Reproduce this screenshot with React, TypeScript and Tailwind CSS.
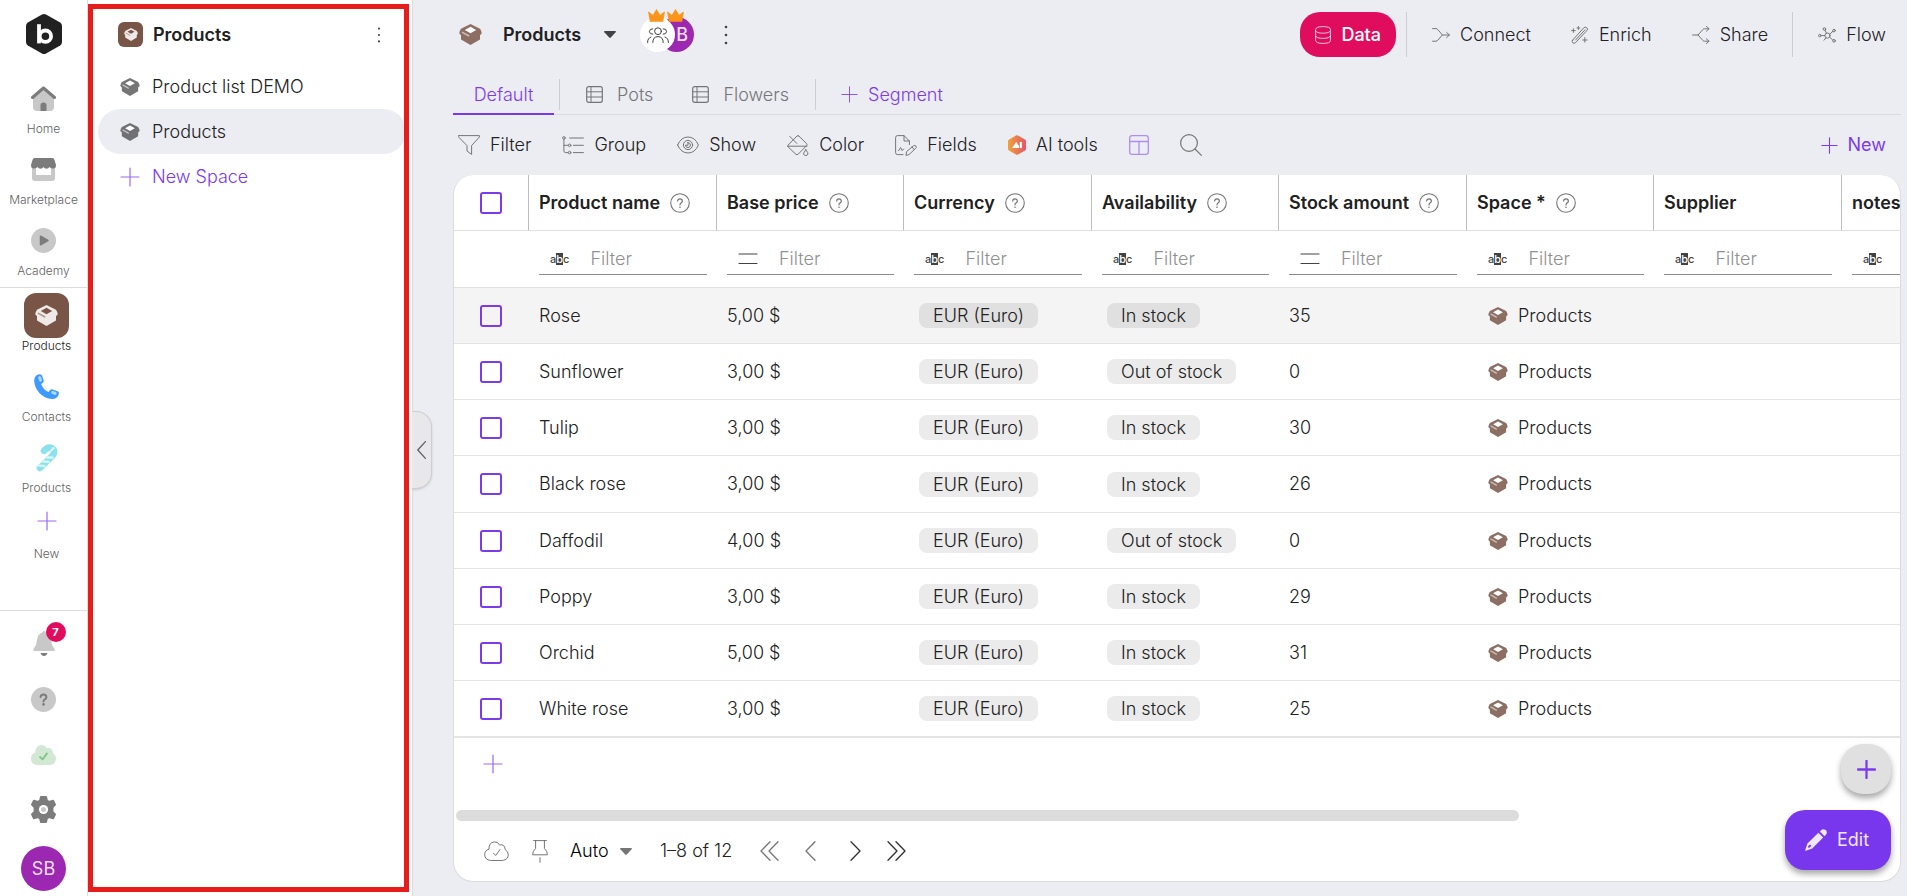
import type { ReactNode } from "react";
import clsx from "clsx";

interface IconProps {
  className?: string;
}

interface Column {
  title: string;
  width: string;
  filter: "text" | "number";
  help?: boolean;
}

interface Product {
  name: string;
  price: string;
  availability: string;
  stock: string;
}

const columns: Column[] = [
  { title: "Product name", width: "w-[188px]", filter: "text", help: true },
  { title: "Base price", width: "w-[187px]", filter: "number", help: true },
  { title: "Currency", width: "w-[188px]", filter: "text", help: true },
  { title: "Availability", width: "w-[187px]", filter: "text", help: true },
  { title: "Stock amount", width: "w-[188px]", filter: "number", help: true },
  { title: "Space *", width: "w-[187px]", filter: "text", help: true },
  { title: "Supplier", width: "w-[188px]", filter: "text" },
  { title: "notes", width: "w-[187px]", filter: "text" },
];

const products: Product[] = [
  { name: "Rose", price: "5,00 $", availability: "In stock", stock: "35" },
  { name: "Sunflower", price: "3,00 $", availability: "Out of stock", stock: "0" },
  { name: "Tulip", price: "3,00 $", availability: "In stock", stock: "30" },
  { name: "Black rose", price: "3,00 $", availability: "In stock", stock: "26" },
  { name: "Daffodil", price: "4,00 $", availability: "Out of stock", stock: "0" },
  { name: "Poppy", price: "3,00 $", availability: "In stock", stock: "29" },
  { name: "Orchid", price: "5,00 $", availability: "In stock", stock: "31" },
  { name: "White rose", price: "3,00 $", availability: "In stock", stock: "25" },
];

function Svg({ className, box, children }: IconProps & { box: string; children: ReactNode }) {
  return (
    <svg
      viewBox={box}
      className={clsx("shrink-0", className)}
      fill="none"
      stroke="currentColor"
      strokeLinecap="round"
      strokeLinejoin="round"
      aria-hidden="true"
    >
      {children}
    </svg>
  );
}

function BoxIcon({ className, hole = "#ffffff" }: IconProps & { hole?: string }) {
  return (
    <Svg box="0 0 23 21" className={className}>
      <path
        d="M11.5 0 21 4.8Q23 8 22.8 9.2L21 11.2V15.6L11.5 21 2 15.6V11.2L.2 9.2Q0 8 2 4.8Z"
        fill="currentColor"
        stroke="none"
      />
      <path d="M11.5 2.8 17.2 6 11.5 9.2 5.8 6Z" fill={hole} stroke="none" />
      <path d="M3.4 8.4 9.6 11.8" stroke={hole} strokeWidth="1.6" opacity=".55" />
    </Svg>
  );
}

function PlusIcon({ className, weight = 1 }: IconProps & { weight?: number }) {
  return (
    <Svg box="0 0 20 20" className={className}>
      <path d="M10 1V19M1 10H19" strokeWidth={weight} />
    </Svg>
  );
}

function DotsIcon({ className }: IconProps) {
  return (
    <Svg box="0 0 4 20" className={className}>
      <g fill="currentColor" stroke="none">
        <circle cx="2" cy="2" r="1.3" />
        <circle cx="2" cy="10" r="1.3" />
        <circle cx="2" cy="18" r="1.3" />
      </g>
    </Svg>
  );
}

function CaretIcon({ className }: IconProps) {
  return (
    <Svg box="0 0 12 7" className={className}>
      <path d="M.8 0H11.2Q12.4.2 11.6 1.2L6.8 6.5Q6 7.2 5.2 6.5L.4 1.2Q-.4.2.8 0Z" fill="currentColor" stroke="none" />
    </Svg>
  );
}

function LogoIcon() {
  return (
    <Svg box="0 0 36 40" className="h-10 w-9">
      <path
        d="M16 .6Q18 -.4 20 .6L34.2 8.6Q36 9.8 36 12V28Q36 30.2 34.2 31.4L20 39.4Q18 40.4 16 39.4L1.8 31.4Q0 30.2 0 28V12Q0 9.8 1.8 8.6Z"
        fill="#212121"
        stroke="none"
      />
      <circle cx="19.4" cy="22.2" r="5.7" stroke="#ffffff" strokeWidth="3.8" />
      <path d="M13 10.2V29.4" stroke="#ffffff" strokeWidth="3.8" strokeLinecap="butt" />
    </Svg>
  );
}

function HomeIcon() {
  return (
    <Svg box="0 0 25 25" className="size-[25px]">
      <path d="M2 11 12.5 2.5 23 11V21Q23 25 19 25H6Q2 25 2 21Z" fill="#c8c8c8" stroke="none" />
      <path d="M1.5 11.5 12.5 2 23.5 11.5" stroke="#7c7c7c" strokeWidth="3" />
      <path d="M9.5 25V19Q9.5 16.5 12.5 16.5T15.5 19V25Z" fill="#7c7c7c" stroke="none" />
    </Svg>
  );
}

function MarketIcon() {
  return (
    <Svg box="0 0 25 23" className="h-[23px] w-[25px]">
      <path d="M1 8H24V20Q24 23 21 23H4Q1 23 1 20Z" fill="#c8c8c8" stroke="none" />
      <path d="M5 9H20V17H5Z" fill="#ffffff" stroke="none" />
      <path
        d="M3.5 0H21.5Q23 0 23.5 2L25 7Q25 10.5 22.5 10.5 19.6 10.5 18.5 9 17.6 10.8 15.5 10.8 13.5 10.8 12.5 9 11.5 10.8 9.5 10.8 7.4 10.8 6.5 9 5.4 10.5 2.5 10.5 0 10.5 0 7L1.5 2Q2 0 3.5 0Z"
        fill="#7c7c7c"
        stroke="none"
      />
    </Svg>
  );
}

function AcademyIcon() {
  return (
    <Svg box="0 0 25 25" className="size-[25px]">
      <circle cx="12.5" cy="12.5" r="12.5" fill="#c8c8c8" stroke="none" />
      <path d="M9.5 8.2 17 12.5 9.5 16.8Z" fill="#7c7c7c" stroke="#7c7c7c" strokeWidth="1.5" />
    </Svg>
  );
}

function PhoneIcon() {
  return (
    <Svg box="0 0 25 25" className="size-[25px]">
      <path
        d="M3.5 .8Q6.5 -.6 8 1.6L9.7 6.2Q10.2 8 8.6 9L7.2 10Q8.6 15 14.4 18L16 16.2Q17 15 18.6 15.4L23.6 17.2Q25.4 18 24.8 20.2 23.4 25 18 25 10.5 24.6 5.4 19 .6 13.6 .2 7.2 0 2.6 3.5 .8Z"
        fill="#3d9bff"
        stroke="none"
      />
      <path d="M5.6 3.6 6.6 6.2M18.6 18.4 21.2 19.4" stroke="#b5d9ff" strokeWidth="2.8" />
    </Svg>
  );
}

function CandyIcon() {
  return (
    <Svg box="0 0 22 28" className="h-7 w-[22px]">
      <path d="M8 6.8Q12 2.4 16 4.2 20 7.4 16.2 12.2L4 24" stroke="#8be2ec" strokeWidth="6.6" />
      <path
        d="M14.6 7 18.4 3.4M9.6 13.2 17.6 13.8M5.6 17.2 13.6 18M2 21.4 9.6 22.2"
        stroke="#d4f5f8"
        strokeWidth="2.4"
        strokeLinecap="butt"
      />
    </Svg>
  );
}

function BellIcon() {
  return (
    <Svg box="0 0 22 25" className="h-[25px] w-[22px]">
      <path
        d="M11 0Q12.5 0 12.8 1.5 17.5 3 18 9 18.2 14 21.5 18 22.5 20 20.5 20H1.5Q-.5 20 .5 18 3.8 14 4 9 4.5 3 9.2 1.5 9.5 0 11 0Z"
        fill="#c8c8c8"
        stroke="none"
      />
      <path d="M7.5 22H14.5Q13.5 25 11 25T7.5 22Z" fill="#7c7c7c" stroke="none" />
    </Svg>
  );
}

function QuestionIcon() {
  return (
    <Svg box="0 0 25 25" className="size-[25px]">
      <circle cx="12.5" cy="12.5" r="12.5" fill="#c8c8c8" stroke="none" />
      <path d="M9.6 10Q9.8 7.4 12.5 7.4T15.4 10Q15.4 11.6 13.8 12.4 12.5 13 12.5 14.6" stroke="#7c7c7c" strokeWidth="2" />
      <circle cx="12.5" cy="17.4" r="1.3" fill="#7c7c7c" stroke="none" />
    </Svg>
  );
}

function CloudCheckIcon() {
  return (
    <Svg box="0 0 25 20" className="h-5 w-[25px]">
      <path
        d="M6 20Q0 19.5 0 13.5 .2 8.8 4.4 7.6 4 1 10 0 14 -.2 15.8 3.2 21.4 2 22 8.2 25 10 25 13.8 24.6 19.4 19 20Z"
        fill="#d2e8d3"
        stroke="none"
      />
      <path d="M9 12 11.6 14.4 16 8.4" stroke="#81c784" strokeWidth="1.8" />
    </Svg>
  );
}

function GearIcon() {
  return (
    <Svg box="0 0 26 28" className="h-[27px] w-[25px]">
      <path
        d="M10.3 1H15.7L16.6 4.8 18.8 6 23 4.8 25 8.9 22.3 11.9V16.1L25 19.1 23 23.2 18.8 22 16.6 23.2 15.7 27H10.3L9.4 23.2 7.2 22 3 23.2 1 19.1 3.7 16.1V11.9L1 8.9 3 4.8 7.2 6 9.4 4.8Z"
        fill="#7c7c7c"
        stroke="#7c7c7c"
        strokeWidth="2"
      />
      <circle cx="13" cy="14" r="4.8" fill="#ffffff" stroke="none" />
      <circle cx="13" cy="14" r="2.6" fill="#c8c8c8" stroke="none" />
    </Svg>
  );
}

function PeopleIcon() {
  return (
    <Svg box="0 0 22 16" className="h-4 w-[22px]">
      <circle cx="11" cy="4.2" r="3.4" />
      <path d="M5.8 15.5Q5.8 9.6 11 9.6T16.2 15.5M5.8 1.8Q2.4 1.6 2.4 4.6 2.6 7.4 5.8 7.2M16.2 1.8Q19.6 1.6 19.6 4.6 19.4 7.4 16.2 7.2M.6 15.5Q.4 11.2 4 10M21.4 15.5Q21.6 11.2 18 10" />
    </Svg>
  );
}

function CrownIcon({ className }: IconProps) {
  return (
    <Svg box="0 0 17 13" className={clsx("h-[13px] w-[17px] text-[#fb9418]", className)}>
      <path d="M2.2 12.5 .6 3 5 6.4 8.5 .6 12 6.4 16.4 3 14.8 12.5Z" fill="currentColor" strokeWidth=".8" />
    </Svg>
  );
}

function SheetIcon() {
  return (
    <Svg box="0 0 17 17" className="size-[17px]">
      <rect x=".7" y=".7" width="15.6" height="15.6" rx="2" strokeWidth="1.2" />
      <path d="M5 .7V16.3M.7 5.8H16.3M.7 11H16.3" />
    </Svg>
  );
}

function FilterIcon() {
  return (
    <Svg box="0 0 22 20" className="h-5 w-[22px]">
      <path d="M.6 .6H21.4V2L13.6 10.6V19.4L9 16V10.6L.6 2Z" />
    </Svg>
  );
}

function GroupIcon() {
  return (
    <Svg box="0 0 22 19" className="h-[19px] w-[22px]">
      <circle cx="1.9" cy="1.9" r="1.3" />
      <circle cx="7.6" cy="9.3" r="1.3" />
      <circle cx="7.6" cy="16.6" r="1.3" />
      <path d="M1.9 3.4V15Q1.9 16.6 3.6 16.6H6M1.9 9.3H6M7.6 2H21.4M11.4 9.3H21.4M11.4 16.6H21.4" />
    </Svg>
  );
}

function EyeIcon() {
  return (
    <Svg box="0 0 22 18" className="h-[18px] w-[22px]">
      <path d="M.6 9Q4 1 11 1T21.4 9Q18 17 11 17T.6 9Z" />
      <circle cx="11" cy="9" r="4.6" />
      <path d="M11 6.6V9.2H8.4Q8.6 11.4 11 11.6 13.4 11.4 13.5 9 13.4 6.8 11 6.6Z" />
    </Svg>
  );
}

function BucketIcon() {
  return (
    <Svg box="0 0 22 21" className="h-[21px] w-[22px]">
      <path d="M11.8 1 19.6 8.6Q20.4 9.6 19.6 10.6L11.2 19.2Q10 20.2 8.8 19.2L1.2 12Q.4 11 1.2 10L10 1Q11 .2 11.8 1ZM.8 11.2H20M2.8 1.4 9.8 8.4" />
      <path d="M18.8 14.8Q21.4 18 21 19 20.4 20.6 18.8 20.6T16.6 19Q16.4 18 18.8 14.8Z" />
    </Svg>
  );
}

function FieldsIcon() {
  return (
    <Svg box="0 0 22 21" className="h-[21px] w-[22px]">
      <path d="M8 19.6H2.6Q.6 19.6 .6 17.6V2.6Q.6 .6 2.6 .6H9L14.4 6V9.6M9 .6V6H14.4M3.6 15.6 5.6 12.6 7.2 15.6 8.6 14" />
      <path d="M11 20 11.6 16.6 18.4 10.8Q20 10 21 11.2T20.6 13.4L14.2 19.4ZM17 12 19.2 14.6" />
    </Svg>
  );
}

function AiIcon() {
  return (
    <svg viewBox="0 0 18 20" className="h-5 w-[18px] shrink-0" aria-hidden="true">
      <defs>
        <linearGradient id="ai" x1="0" x2="1" y1="0" y2="0">
          <stop offset="0" stopColor="#f0a13a" />
          <stop offset="1" stopColor="#e6556b" />
        </linearGradient>
      </defs>
      <path
        d="M8 .4Q9 0 10 .4L17 4.4Q18 5 18 6V14Q18 15 17 15.6L10 19.6Q9 20 8 19.6L1 15.6Q0 15 0 14V6Q0 5 1 4.4Z"
        fill="url(#ai)"
      />
      <path d="M4 13 8.2 7 11 11V13ZM11.8 7H13.8V13H11.8Z" fill="#ffffff" />
    </svg>
  );
}

function LayoutIcon() {
  return (
    <Svg box="0 0 20 20" className="size-5 text-[#b08cf5]">
      <rect x=".7" y=".7" width="18.6" height="18.6" rx="2.4" strokeWidth="1.3" />
      <path d="M.7 6.5H19.3M10 6.5V19.3" strokeWidth="1.3" />
    </Svg>
  );
}

function SearchIcon() {
  return (
    <Svg box="0 0 22 22" className="size-[22px] text-[#757575]">
      <circle cx="9" cy="9" r="8.4" strokeWidth="1.2" />
      <path d="M15 15 21.4 21.4" strokeWidth="1.2" />
    </Svg>
  );
}

function DataIcon() {
  return (
    <Svg box="0 0 16 18" className="h-[18px] w-4">
      <path
        d="M.6 3.4Q.6 .6 8 .6T15.4 3.4V14.6Q15.4 17.4 8 17.4T.6 14.6ZM.6 5Q1.6 7.2 8 7.2T15.4 5M.6 10Q1.6 12.4 8 12.4T15.4 10"
        opacity=".75"
      />
    </Svg>
  );
}

function ConnectIcon() {
  return (
    <Svg box="0 0 18 18" className="size-[18px]">
      <path d="M.6 2.6H4Q5 2.6 5.8 3.6L10.4 9 5.8 14.2Q5 15.2 4 15.2H.6M10.4 9H17.4M14.6 6.4 17.4 9 14.6 11.6" />
    </Svg>
  );
}

function EnrichIcon() {
  return (
    <Svg box="0 0 18 18" className="size-[18px]">
      <path d="M1.6 14.2 12.8 1.8Q14.4 .4 15.8 1.8T16 4.4L4.6 16.6Q3 18 1.8 16.8T1.6 14.2ZM4.6 14 14 3.8" />
      <path d="M2.4 2.8V6.4M.6 4.6H4.2M7.4 .6V3.4M6 2H8.8M13.8 11.6V16.2M11.6 14H16.2" />
    </Svg>
  );
}

function ShareIcon() {
  return (
    <Svg box="0 0 18 18" className="size-[18px]">
      <path d="M.6 9H6L11 3.4Q11.6 2.8 12.6 2.8H17M6 9 11 14.6Q11.6 15.2 12.6 15.2H17M14.4 .4 17 2.8 14.4 5.2M14.4 12.8 17 15.2 14.4 17.6" />
    </Svg>
  );
}

function FlowIcon() {
  return (
    <Svg box="0 0 18 16" className="h-4 w-[18px]">
      <circle cx="9.5" cy="8.6" r="2.6" />
      <circle cx="1.8" cy="8.6" r="1.3" />
      <circle cx="6.4" cy="2" r="1.3" />
      <circle cx="16" cy="3.6" r="1.3" />
      <circle cx="16" cy="13.8" r="1.3" />
      <path d="M3.2 8.6H6.8M7 3.2 8.4 6.2M11.8 7.2 14.8 4.4M11.8 10.2 14.6 13M8 10.8 6 13.2" />
    </Svg>
  );
}

function HelpIcon() {
  return (
    <Svg box="0 0 20 20" className="size-5 text-[#757575]">
      <circle cx="10" cy="10" r="9.3" strokeWidth="1.1" />
      <path d="M7.6 8Q7.8 5.8 10 5.8T12.4 8Q12.4 9.2 11 10 10 10.6 10 12" strokeWidth="1.2" />
      <circle cx="10" cy="14.2" r=".8" fill="currentColor" stroke="none" />
    </Svg>
  );
}

function CloudOutlineIcon() {
  return (
    <Svg box="0 0 25 20" className="h-5 w-[25px]">
      <path d="M6 19.4Q.8 18.8 .7 13.6 .8 9.2 5 8.2 4.6 1.8 10.2 .9 14 .6 15.6 4 20.6 2.6 21.2 8.6 24.2 10.4 24.3 13.8 24 18.6 19 19.4Z" />
      <path d="M9.4 12.2 11.8 14.4 16 8.6" />
    </Svg>
  );
}

function PinIcon() {
  return (
    <Svg box="0 0 16 23" className="h-[23px] w-4">
      <path d="M1.6 .6H14.4M3.6 .6V8.4Q.6 11 .6 14.8H15.4Q15.4 11 12.4 8.4V.6M8 17.6V22.4" />
    </Svg>
  );
}

function Chevrons({ double, flip }: { double?: boolean; flip?: boolean }) {
  return (
    <Svg box={double ? "0 0 19 20" : "0 0 11 20"} className={clsx("h-5", double ? "w-[19px]" : "w-[11px]", flip && "rotate-180")}>
      <path d="M10 .8 1 10 10 19.2" strokeWidth="1.3" />
      {double && <path d="M18 .8 9 10 18 19.2" strokeWidth="1.3" />}
    </Svg>
  );
}

function PencilIcon() {
  return (
    <Svg box="0 0 22 22" className="size-[22px]">
      <g fill="currentColor" stroke="none">
        <path d="M14.8 2.4 17 .6Q18.8 -.4 20.8 1.2 22.6 3.2 21.4 5L19.6 7.2Z" />
        <path d="M13.4 3.8 18.2 8.6 7.2 19.4 .8 21.8Q0 22 .2 21.2L2.4 14.6Z" />
      </g>
      <path d="M4 17.8 5.2 16.6" stroke="#7837ed" strokeWidth="2" />
    </Svg>
  );
}

function TextFilterIcon() {
  return (
    <span className="flex w-5 items-center justify-center text-[11px] leading-3 font-medium text-[#424242]" aria-hidden="true">
      a<span className="bg-[#424242] text-white">b</span>c
    </span>
  );
}

function NumberFilterIcon() {
  return (
    <Svg box="0 0 20 14" className="h-[14px] w-5 text-[#424242]">
      <path d="M1 2H19M1 11.5H19" strokeWidth="1.2" />
    </Svg>
  );
}

function RailItem({ label, active, children }: { label: string; active?: boolean; children: ReactNode }) {
  return (
    <a
      href="#"
      className={clsx("flex h-[71px] flex-col items-center text-xs leading-4", active ? "text-[#212121]" : "text-[#616161]")}
    >
      <span className="flex h-[45px] items-center">{children}</span>
      {label}
    </a>
  );
}

function Rail() {
  return (
    <nav className="flex w-[88px] shrink-0 flex-col border-r border-[#dcdcdc] bg-white">
      <div className="flex h-[76px] justify-center pt-[14px]">
        <LogoIcon />
      </div>
      <div className="h-[211px]">
        <RailItem label="Home">
          <HomeIcon />
        </RailItem>
        <RailItem label="Marketplace">
          <MarketIcon />
        </RailItem>
        <RailItem label="Academy">
          <AcademyIcon />
        </RailItem>
      </div>
      <div className="flex-1 border-y border-[#dcdcdc] pt-[5px] pl-[6px]">
        <RailItem label="Products" active>
          <span className="flex size-[45px] items-center justify-center rounded-xl bg-[#795548] text-[#efe9e7]">
            <BoxIcon className="h-[21px] w-[23px]" hole="#795548" />
          </span>
        </RailItem>
        <RailItem label="Contacts">
          <PhoneIcon />
        </RailItem>
        <RailItem label="Products">
          <CandyIcon />
        </RailItem>
        <button className="flex w-full flex-col items-center gap-[10px] text-xs leading-4 text-[#616161]">
          <span className="flex h-[30px] items-center text-[#9b6bf2]">
            <PlusIcon className="size-5" weight={1.2} />
          </span>
          New
        </button>
      </div>
      <div className="flex flex-col items-center pt-1 pb-[5px]">
        <button className="relative flex h-14 items-center" aria-label="Notifications">
          <BellIcon />
          <span className="absolute top-[7px] left-[13px] flex size-5 items-center justify-center rounded-full bg-[#e00d5f] text-[11px] font-bold text-white">
            7
          </span>
        </button>
        <button className="flex h-14 items-center" aria-label="Help">
          <QuestionIcon />
        </button>
        <button className="flex h-14 items-center" aria-label="Sync status">
          <CloudCheckIcon />
        </button>
        <button className="flex h-[52px] items-center" aria-label="Settings">
          <GearIcon />
        </button>
        <button className="mt-[11px] size-[45px] rounded-full bg-[#9c27b0] font-normal text-[#f0dff3]">SB</button>
      </div>
    </nav>
  );
}

function SpaceItem({ label, active, accent, icon }: { label: string; active?: boolean; accent?: boolean; icon: ReactNode }) {
  return (
    <a
      href="#"
      className={clsx(
        "flex h-[45px] items-center gap-3 rounded-full pl-[22px]",
        active && "bg-[#ecedf3]",
        accent ? "text-[#7c3aed]" : "text-[#212121]"
      )}
    >
      {icon}
      {label}
    </a>
  );
}

function Sidebar() {
  return (
    <aside className="relative w-[325px] shrink-0 border-r border-[#dcdcdc] bg-white">
      <div className="flex h-16 items-center gap-[10px] pt-[5px] pr-[31px] pl-[30px]">
        <span className="flex size-[25px] items-center justify-center rounded-md bg-[#795548] text-[#efe9e7]">
          <BoxIcon className="h-[13px] w-[14px]" hole="#795548" />
        </span>
        <h2 className="flex-1 font-semibold text-[#212121]">Products</h2>
        <button aria-label="Space options">
          <DotsIcon className="h-4 w-1 text-[#424242]" />
        </button>
      </div>
      <div className="pr-[6px] pl-[10px]">
        <SpaceItem label="Product list DEMO" icon={<BoxIcon className="h-[18px] w-5 text-[#757575]" />} />
        <SpaceItem label="Products" active icon={<BoxIcon className="h-[18px] w-5 text-[#707075]" />} />
        <SpaceItem label="New Space" accent icon={<PlusIcon className="size-5 text-[#9b6bf2]" weight={1.2} />} />
      </div>
      <div className="pointer-events-none absolute inset-y-1 right-[3px] left-0 border-5 border-[#e91c1c]" />
      <button
        className="absolute top-1/2 -right-5 mt-[2px] flex h-[78px] w-5 -translate-y-1/2 items-center justify-center rounded-r-2xl border border-l-0 border-[#cfcfd2] bg-[#e8e8ea] text-[#616161] shadow-sm"
        aria-label="Collapse"
      >
        <Svg box="0 0 9 18" className="h-[18px] w-[9px]">
          <path d="M8.4 .6 .8 9 8.4 17.4" strokeWidth="1.3" />
        </Svg>
      </button>
    </aside>
  );
}

function TopLink({ label, icon }: { label: string; icon: ReactNode }) {
  return (
    <button className="flex h-[45px] items-center gap-[10px] text-[#212121]">
      <span className="text-[#757575]">{icon}</span>
      {label}
    </button>
  );
}

function Header() {
  return (
    <header className="flex h-[57px] items-center pt-3 pr-[15px]">
      <BoxIcon className="ml-[6px] h-[21px] w-[23px] text-[#8d6e63]" />
      <button className="ml-[21px] flex items-center gap-[23px] font-semibold text-[#212121]">
        Products
        <CaretIcon className="h-[7px] w-3 text-[#424242]" />
      </button>
      <div className="relative ml-6 flex">
        <span className="z-10 flex size-[35px] items-center justify-center rounded-full bg-white text-[#424242]">
          <PeopleIcon />
        </span>
        <span className="-ml-4 flex size-[35px] items-center justify-end rounded-full bg-[#9c27b0] pr-[6px] font-medium text-[#f0dff3]">
          B
        </span>
        <CrownIcon className="absolute -top-2 left-2 z-20" />
        <CrownIcon className="absolute -top-2 left-[27px] z-20" />
      </div>
      <button className="ml-[30px]" aria-label="More options">
        <DotsIcon className="h-5 w-1 text-[#424242]" />
      </button>
      <div className="ml-auto flex items-center">
        <button className="flex h-[45px] items-center gap-[10px] rounded-[20px] bg-[#e00d5f] px-[15px] font-medium text-white">
          <DataIcon />
          Data
        </button>
        <div className="ml-[10px] flex h-[45px] gap-10 border-l border-[#cdced4] pr-6 pl-[25px]">
          <TopLink label="Connect" icon={<ConnectIcon />} />
          <TopLink label="Enrich" icon={<EnrichIcon />} />
          <TopLink label="Share" icon={<ShareIcon />} />
        </div>
        <div className="flex h-[45px] border-l border-[#cdced4] pl-[25px]">
          <TopLink label="Flow" icon={<FlowIcon />} />
        </div>
      </div>
    </header>
  );
}

function SegmentTabs() {
  return (
    <div className="mt-[22px] flex h-9 border-b border-[#dcdcdc]">
      <button className="-mb-px w-[101px] border-b-2 border-[#7837ed] pb-[3px] text-[#7c3aed]">Default</button>
      <div className="ml-[5px] flex h-[31px] gap-[39px] border-x border-[#cdced4] px-[26px] text-[#757578]">
        <button className="flex items-center gap-[14px]">
          <SheetIcon />
          Pots
        </button>
        <button className="flex items-center gap-[14px]">
          <SheetIcon />
          Flowers
        </button>
      </div>
      <button className="ml-[25px] flex h-[31px] items-center gap-[10px] text-[#7c3aed]">
        <PlusIcon className="size-[17px]" />
        Segment
      </button>
    </div>
  );
}

function Tool({ label, icon }: { label: string; icon: ReactNode }) {
  return (
    <button className="flex items-center gap-[10px] text-[#212121]">
      <span className="text-[#757575]">{icon}</span>
      {label}
    </button>
  );
}

function Toolbar() {
  return (
    <div className="flex h-[60px] items-center gap-[31px] pr-[15px] pl-[5px]">
      <Tool label="Filter" icon={<FilterIcon />} />
      <Tool label="Group" icon={<GroupIcon />} />
      <Tool label="Show" icon={<EyeIcon />} />
      <Tool label="Color" icon={<BucketIcon />} />
      <Tool label="Fields" icon={<FieldsIcon />} />
      <Tool label="AI tools" icon={<AiIcon />} />
      <button aria-label="Layout">
        <LayoutIcon />
      </button>
      <button aria-label="Search">
        <SearchIcon />
      </button>
      <button className="ml-auto flex items-center gap-[10px] font-normal text-[#7c3aed]">
        <PlusIcon className="size-[17px]" weight={1.3} />
        New
      </button>
    </div>
  );
}

function Checkbox({ label }: { label: string }) {
  return (
    <input
      type="checkbox"
      aria-label={label}
      className="mx-auto block size-[22px] appearance-none rounded-[3px] border-2 border-[#7c3aed] checked:bg-[#7c3aed]"
    />
  );
}

function Pill({ dark, children }: { dark: boolean; children: ReactNode }) {
  return (
    <span
      className={clsx(
        "ml-[5px] inline-block h-[25px] rounded-lg px-[14px] align-middle leading-[25px]",
        dark ? "bg-[#e0e0e0]" : "bg-[#ebebeb]"
      )}
    >
      {children}
    </span>
  );
}

function ProductTable() {
  return (
    <table className="w-[1575px] table-fixed border-separate border-spacing-0 text-left">
      <thead>
        <tr className="h-14">
          <th className="w-[75px] border-r border-b border-r-[#bdbdbd] border-b-[#e0e0e0]">
            <Checkbox label="Select all" />
          </th>
          {columns.map((column) => (
            <th
              key={column.title}
              className={clsx("border-r border-b border-r-[#bdbdbd] border-b-[#e0e0e0] px-[10px] font-semibold text-[#212121]", column.width)}
            >
              <span className="flex items-center gap-[10px] whitespace-nowrap">
                {column.title}
                {column.help && <HelpIcon />}
              </span>
            </th>
          ))}
        </tr>
        <tr className="h-[57px]">
          <td className="border-b border-[#e0e0e0]" />
          {columns.map((column) => (
            <td key={column.title} className="border-b border-[#e0e0e0] px-[10px]">
              <label className="flex h-8 items-center gap-[21px] border-b border-[#8c8c8c] pl-[11px]">
                {column.filter === "text" ? <TextFilterIcon /> : <NumberFilterIcon />}
                <input
                  placeholder="Filter"
                  aria-label={`Filter ${column.title}`}
                  className="w-full min-w-0 bg-transparent outline-none placeholder:text-[#919191]"
                />
              </label>
            </td>
          ))}
        </tr>
      </thead>
      <tbody className="[&_td]:border-b [&_td]:border-[#e4e4e6] [&_tr:last-child_td]:border-b-2">
        {products.map((product, index) => (
          <tr key={product.name} className={clsx("h-14 text-[#212121] nth-[4n]:h-[57px]", index === 0 && "bg-[#f4f4f4]")}>
            <td className="pr-px">
              <Checkbox label={`Select ${product.name}`} />
            </td>
            <td className="px-[10px]">{product.name}</td>
            <td className="px-[10px]">{product.price}</td>
            <td className="px-[10px]">
              <Pill dark={index === 0}>EUR (Euro)</Pill>
            </td>
            <td className="px-[10px]">
              <Pill dark={index === 0}>{product.availability}</Pill>
            </td>
            <td className="px-[10px]">{product.stock}</td>
            <td className="px-[10px]">
              <a href="#" className="flex items-center gap-[10px] pl-[11px]">
                <BoxIcon className="h-[18px] w-5 text-[#8d6e63]" />
                Products
              </a>
            </td>
            <td />
            <td />
          </tr>
        ))}
      </tbody>
    </table>
  );
}

function Pager() {
  return (
    <div className="flex h-[60px] items-center pl-[30px] text-[#757575]">
      <CloudOutlineIcon />
      <button className="ml-[23px]" aria-label="Pin">
        <PinIcon />
      </button>
      <label className="relative ml-[22px] flex items-center">
        <select aria-label="Rows per page" className="w-[62px] appearance-none bg-transparent text-black">
          <option>Auto</option>
        </select>
        <CaretIcon className="pointer-events-none absolute right-0 h-[7px] w-3" />
      </label>
      <span className="ml-7 w-[70px] whitespace-nowrap text-[#212121]">1–8 of 12</span>
      <div className="ml-[30px] flex items-center">
        <button aria-label="First page">
          <Chevrons double />
        </button>
        <button className="ml-[26px]" aria-label="Previous page">
          <Chevrons />
        </button>
        <button className="ml-[34px] text-[#303033]" aria-label="Next page">
          <Chevrons flip />
        </button>
        <button className="ml-[26px] text-[#303033]" aria-label="Last page">
          <Chevrons double flip />
        </button>
      </div>
    </div>
  );
}

export default function App() {
  return (
    <div className="flex h-screen overflow-hidden bg-[#ecedf3] font-['Inter',sans-serif] text-lg leading-6 font-light">
      <Rail />
      <Sidebar />
      <main className="flex min-w-0 flex-1 flex-col pr-[6px] pb-[14px] pl-10">
        <Header />
        <SegmentTabs />
        <Toolbar />
        <section className="relative flex min-h-0 flex-1 flex-col overflow-hidden rounded-[20px] border border-t-0 border-[#dcdcde] bg-white">
          <div className="min-h-0 flex-1 overflow-hidden">
            <ProductTable />
            <button className="ml-[29px] flex h-[51px] items-center text-[#9b6bf2]" aria-label="Add row">
              <PlusIcon className="size-5" weight={1.2} />
            </button>
          </div>
          <div className="px-[2px]">
            <div className="h-[11px] w-[73.7%] rounded-full bg-[#dcdcdc]" />
          </div>
          <Pager />
          <div className="absolute right-[9px] bottom-[11px] flex flex-col items-end gap-4">
            <button
              className="flex size-[50px] items-center justify-center rounded-[22px] bg-[#e0e0e0] text-[#7c3aed] shadow-[0_4px_6px_rgba(0,0,0,0.35)]"
              aria-label="Add"
            >
              <PlusIcon className="size-[19px]" weight={2.4} />
            </button>
            <button className="flex h-[60px] w-[106px] items-center gap-[10px] rounded-[20px] bg-[#7837ed] pl-5 font-normal text-[#efe7fd] shadow-[0_4px_6px_rgba(0,0,0,0.35)]">
              <PencilIcon />
              Edit
            </button>
          </div>
        </section>
      </main>
    </div>
  );
}
